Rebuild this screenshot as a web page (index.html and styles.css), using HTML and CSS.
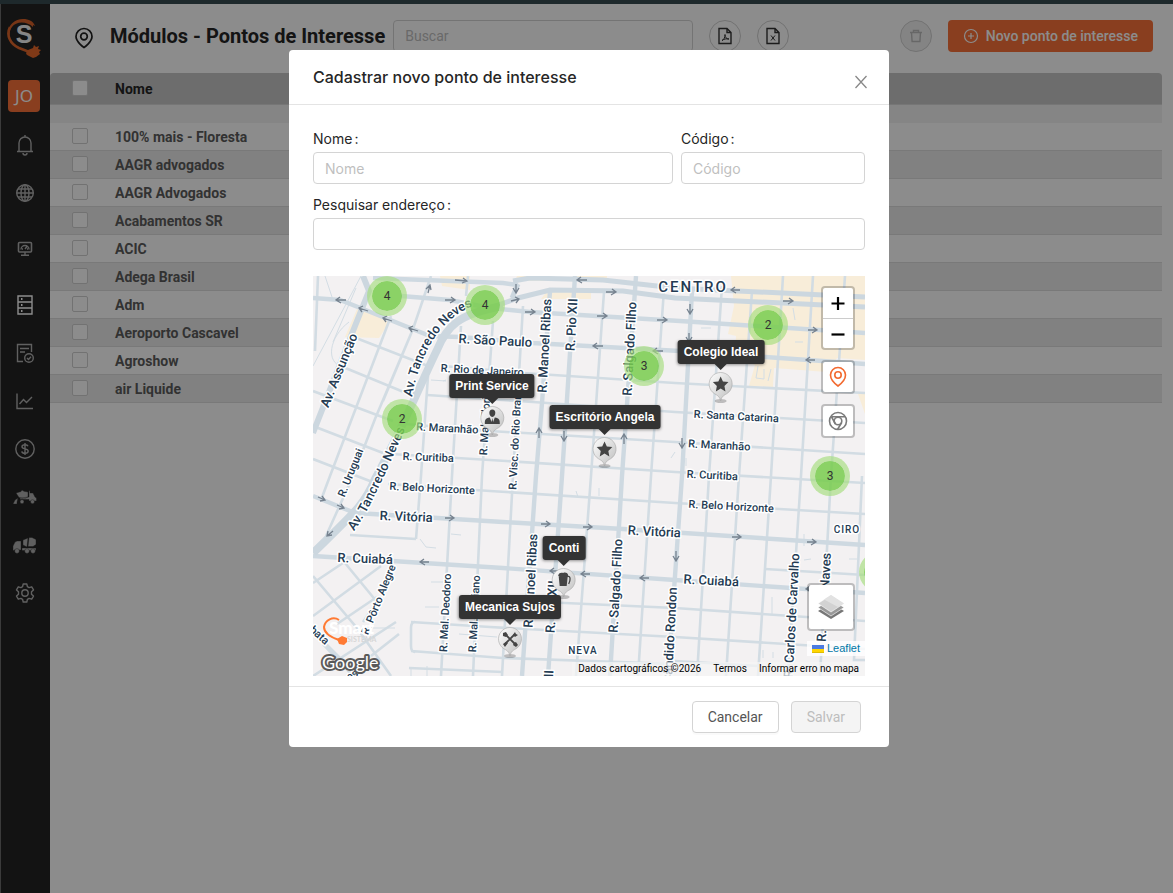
FILE: index.html
```html
<!DOCTYPE html>
<html lang="pt-BR">
<head>
<meta charset="utf-8">
<meta name="viewport" content="width=device-width, initial-scale=1">
<title>Módulos - Pontos de Interesse</title>
<link rel="stylesheet" href="styles.css">
</head>
<body>
<div class="topbar"></div>
<div class="shell">
  <nav class="sidebar" aria-label="Menu principal">
    <a class="brand" href="#" aria-label="Início">
      <svg width="36" height="42" viewBox="0 0 36 42">
        <path d="M3 9c-4 8 0 17 9 21l8 3 2 4" fill="none" stroke="#e0672c" stroke-width="2.600"/>
        <path d="M1 15C1 7 8 1 16 1c6 0 10 2 12 7l-2-1v2C20 3 9 3 5 9c-2 3-3 5-2 8z" fill="#d96228"/>
        <path d="M19 36l2-4 5-2 1-3 2 2 3-1-1 3 3 1-2 2 1 2-4 3-3 1-4-2z" fill="#e8682a"/>
        <text x="17" y="25" class="brand-letter">S</text>
      </svg>
    </a>
    <button class="avatar" type="button">JO</button>
    <ul class="menu">
      <li><a href="#" aria-label="Notificações"><svg width="20" height="22" viewBox="0 0 20 22"><path d="M10 1v2M4 17V9a6 6 0 0 1 12 0v8M2 17.500h16M8 19a2 2 0 0 0 4 0"/></svg></a></li>
      <li><a href="#" aria-label="Mapa"><svg width="20" height="20" viewBox="0 0 20 20"><circle cx="10" cy="10" r="8.300"/><ellipse cx="10" cy="10" rx="4" ry="8.300"/><path d="M10 1.700v16.600M1.700 10h16.600M3 6h14M3 14h14"/></svg></a></li>
      <li class="tall"><a href="#" aria-label="Painel"><svg width="16" height="16" viewBox="0 0 16 16"><rect x="1.500" y="1.500" width="13" height="9.500" rx="1" stroke-width="1.600"/><path d="M4 8.500a4 4 0 0 1 8 0M8 8l2-2.500M5 8h1M10 8h1M8 11v3M4 14.300h8"/></svg></a></li>
      <li class="current"><a href="#" aria-label="Módulos" aria-current="page"><svg width="18" height="22" viewBox="0 0 18 22"><path d="M2 2h14v18H2zM2 8h14M2 14h14"/><path d="M5 5h1.500M5 11h1.500M5 17h1.500" stroke-width="2"/></svg></a></li>
      <li><a href="#" aria-label="Auditoria"><svg width="20" height="22" viewBox="0 0 20 22"><path d="M8 19.500H2.500v-17h14V10M5 6.500h9M5 10h5"/><circle cx="14" cy="16" r="4.300"/><path d="M12 16l1.500 1.500L16 14.700"/></svg></a></li>
      <li><a href="#" aria-label="Relatórios"><svg width="20" height="20" viewBox="0 0 20 20"><path d="M2 2.500v15h16M4.500 13l4-4.500 3 3L17 6"/></svg></a></li>
      <li><a href="#" aria-label="Financeiro"><svg width="22" height="22" viewBox="0 0 22 22"><circle cx="11" cy="11" r="9.200"/><path d="M14 8.300C13.600 7 12.400 6.700 11 6.700c-1.800 0-3 .8-3 2.100 0 3 6.200 1.200 6.200 4.300 0 1.400-1.400 2.200-3.200 2.200-1.700 0-3-.6-3.200-2M11 5v12"/></svg></a></li>
      <li><a href="#" aria-label="Descarga"><svg class="solid" width="24" height="14" viewBox="0 0 24 14"><path d="M3 3l5-1.500L9 0l2 1.300L15 2v5l-4 2-5-1.500zM0 14l2-4 3-2-1 4v2zM16 1l1-.5V3h3l2 4 1.500 1v3H16V9.500h-9V8l9-1z"/><circle cx="9" cy="11.700" r="2"/><circle cx="19.500" cy="11.700" r="2"/></svg></a></li>
      <li><a href="#" aria-label="Betoneiras"><svg class="solid" width="24" height="17" viewBox="0 0 24 17"><path d="M0 14V9l2-4 2-1h4v9H1zM10 3l5-2-1 9-4-2zM16 .5l3 0 4 2v5l-3 2h-5zM9 11h14v2.500H9z"/><circle cx="4" cy="14" r="2.400"/><circle cx="14" cy="14" r="2.400"/><circle cx="20" cy="14" r="2.400"/></svg></a></li>
      <li><a href="#" aria-label="Configurações"><svg width="22" height="22" viewBox="0 0 22 22"><path d="M9.200 2h3.600l.6 2.600 1.700 1 2.600-.8 1.800 3.100-2 1.900v2.400l2 1.900-1.800 3.100-2.600-.8-1.700 1-.6 2.600H9.200l-.6-2.600-1.700-1-2.600.8-1.800-3.100 2-1.900V9.800l-2-1.900 1.800-3.100 2.600.8 1.700-1z" stroke-linejoin="round"/><circle cx="11" cy="11" r="3.200"/></svg></a></li>
    </ul>
  </nav>

  <main class="page">
    <header class="toolbar">
      <svg class="title-icon" width="20" height="24" viewBox="0 0 20 24"><path d="M10 21.500S2 16 2 10.500a8 8 0 0 1 16 0C18 16 10 21.500 10 21.500z"/><circle cx="10" cy="10.500" r="3.300"/></svg>
      <h1>Módulos - Pontos de Interesse</h1>
      <input class="field search" type="search" placeholder="Buscar" aria-label="Buscar">
      <div class="exports">
        <button class="round" type="button" aria-label="Exportar PDF"><svg width="14" height="18" viewBox="0 0 14 18"><path d="M1 1.500h8l4 4v11H1zM9 1.500v4h4"/><path class="fine" d="M4 13.500c2-1 3-3 3-6 0 3 1.500 4.500 4 4.500-3-.5-5 0-7 1.500"/></svg></button>
        <button class="round" type="button" aria-label="Exportar Excel"><svg width="14" height="18" viewBox="0 0 14 18"><path d="M1 1.500h8l4 4v11H1zM9 1.500v4h4"/><path class="fine" d="M5 8.500l4 5M9 8.500l-4 5"/></svg></button>
      </div>
      <div class="actions">
        <button class="round off" type="button" aria-label="Excluir" disabled><svg width="14" height="14" viewBox="0 0 14 14"><path d="M1 3.500h12M4.500 3.500v-2h5v2M2.500 3.500l.6 9h7.800l.6-9"/></svg></button>
        <button class="primary" type="button"><svg width="16" height="16" viewBox="0 0 16 16"><circle cx="8" cy="8" r="6.500"/><path d="M8 5v6M5 8h6"/></svg>Novo ponto de interesse</button>
      </div>
    </header>

    <table class="grid">
      <thead>
        <tr><th class="pick"><input type="checkbox" aria-label="Selecionar todos"></th><th>Nome</th></tr>
        <tr class="filter"><td colspan="2"></td></tr>
      </thead>
      <tbody>
        <tr><td class="pick"><input type="checkbox" aria-label="Selecionar 100% mais - Floresta"></td><td>100% mais - Floresta</td></tr>
        <tr><td class="pick"><input type="checkbox" aria-label="Selecionar AAGR advogados"></td><td>AAGR advogados</td></tr>
        <tr><td class="pick"><input type="checkbox" aria-label="Selecionar AAGR Advogados"></td><td>AAGR Advogados</td></tr>
        <tr><td class="pick"><input type="checkbox" aria-label="Selecionar Acabamentos SR"></td><td>Acabamentos SR</td></tr>
        <tr><td class="pick"><input type="checkbox" aria-label="Selecionar ACIC"></td><td>ACIC</td></tr>
        <tr><td class="pick"><input type="checkbox" aria-label="Selecionar Adega Brasil"></td><td>Adega Brasil</td></tr>
        <tr><td class="pick"><input type="checkbox" aria-label="Selecionar Adm"></td><td>Adm</td></tr>
        <tr><td class="pick"><input type="checkbox" aria-label="Selecionar Aeroporto Cascavel"></td><td>Aeroporto Cascavel</td></tr>
        <tr><td class="pick"><input type="checkbox" aria-label="Selecionar Agroshow"></td><td>Agroshow</td></tr>
        <tr><td class="pick"><input type="checkbox" aria-label="Selecionar air Liquide"></td><td>air Liquide</td></tr>
      </tbody>
    </table>
  </main>
</div>

<div class="mask">
  <section class="modal" role="dialog" aria-modal="true" aria-labelledby="dialog-title">
    <header class="modal-head">
      <h2 id="dialog-title">Cadastrar novo ponto de interesse</h2>
      <button class="close" type="button" aria-label="Fechar"><svg width="14" height="14" viewBox="0 0 14 14"><path d="M1.500 1l11 12M12.500 1l-11 12"/></svg></button>
    </header>
    <form class="modal-body">
      <div class="form-row">
        <div class="form-item wide"><label for="nome">Nome<span class="colon">:</span></label><input class="field" id="nome" type="text" placeholder="Nome"></div>
        <div class="form-item"><label for="codigo">Código<span class="colon">:</span></label><input class="field" id="codigo" type="text" placeholder="Código"></div>
      </div>
      <div class="form-item"><label for="endereco">Pesquisar endereço<span class="colon">:</span></label><input class="field" id="endereco" type="text"></div>

      <div class="map">
        <svg class="map-tiles" viewBox="0 0 552 400" preserveAspectRatio="xMidYMid slice">
          <defs>
            <path id="tancredo-n" d="M99 121C104 92 116 66 130 51C141 39 152 33 170 25"/>
            <path id="tancredo-s" d="M41 255C54 238 64 214 74 194C83 172 92 158 97 136"/>
          </defs>
          <g class="zones">
            <path d="M44 33l34 11-12 18-34-1zM127 0h30v14l-28-4zM204 0h34v5h-36zM234 15h44v8h-50zM262 0h32v4h-32zM418 0h134v84l-28-2-10 14-53-4-1 19-24-1 6-21-20-7 1-22-8-2 6-28z"/>
            <path d="M545 118l7 0v20zM0 274l10-9 3 3-12 11z"/>
          </g>
          <g class="lanes">
            <path d="M43 12L20 66M48 0L0 90M12 0l8 24M30 91c-18-4-14-30 6-45M130 105l3-1M118 104l15 1M388 52h10M455 105l3-12M445 90l-2 12 8 1v-10M263 215l2 6M286 212v8M138 258l10 1M107 263l6 8 10 1M118 306h12M112 331h14M52 352h30M98 392l0 8M114 390v10M146 358l38 3M459 321v18M491 270v-12M498 283l-7 1M544 283h-8M482 44l-2-12M490 66h-8M373 182v8M362 176l-4 6M480 324l-2 12M450 374v8M460 376v6"/>
          </g>
          <g class="roads">
            <path d="M118 0L100 53L62 143L40 200L13 260M78 40L17 200L8 224M5 0L2 75M43 62l72 28M30 91l68 28M0 115l80 30M0 150l70 27M0 183l62 24M100 53L70 125M155 0l-2 20"/>
            <path d="M130 90L210 97L362 107L552 117M114 119L220 126L362 136L552 147M92 148L177 155L362 166L552 178M78 178L177 184L362 196L552 207M75 208L177 215L362 227L552 238M37 259l66 4M452 293l100 6"/>
            <path d="M98 346L177 351L362 361L552 373M230 326L362 332L552 345M98 375L190 382L362 388M102 346q-4 0-4 6v18q0 6 4 6M96 392l94 4M362 385L445 390"/>
            <path d="M115 100L108 200L103 263M148 50L139 200L128 400M180 45L169 200L160 400M210 30L200 200L189 400M291 16L278 200L263 400M351 13L338 200L325 400M409 10L396 200L384 400M439 15L426 200L413 400M470 0L458 200L445 400M500 0L488 200L475 400M532 0L518 200L507 400M549 200L541 384h11"/>
            <path d="M0 307l30-20M0 340l68-50M0 400l83-54M24 348l40-27M58 380l28-22M0 300l44 52l34 48M32 287l32 39l-14 20M10 368l30 32M0 355l30 30"/>
          </g>
          <g class="avenues">
            <path d="M60 2L190 7L205 9M0 22L27 24L50 33L117 60L147 61L219 67L367 75L552 88M88 20L137 24L177 32L217 36L367 45L552 57"/>
            <path d="M43 237L190 246L310 253L552 269M0 280L190 292L362 304L552 317M0 220l42 17"/>
            <path d="M237 15L229 127L223 200L209 400M262 0L249 200L235 400M323 0L309 200L297 400M379 15L369 200L355 400"/>
          </g>
          <g class="highways">
            <path d="M50 0L56 15L42 50L0 157" stroke-width="6"/>
            <path d="M177 32L205 22L237 14L310 15L362 22L552 31M200 5L217 2L290 4L362 12L552 21M205 8l-6 14" stroke-width="5"/>
            <path d="M190 30C145 38 134 50 124 74C112 98 90 152 62 203C52 228 42 236 0 277" stroke-width="8"/>
          </g>
          <g class="arrows">
            <path d="M142 4l12 1m-4-3l4 3-5 2M33 24H23m4-3l-4 3 5 3M55 35l-9-3m4-2l-4 2 3 4M79 45l-9-3m4-2l-4 2 3 4M105 55l-9-3m4-2l-4 2 3 4M115 17l2-8m-4 4l4-4 1 5M132 24h10m-4-3l4 3-5 3M212 36h10m-4-3l4 3-5 3M284 40h10m-4-3l4 3-5 3M344 44h10m-4-3l4 3-5 3M293 16h10m-4-3l4 3-5 3M274 4h-10m4-3l-4 3 5 3M290 70h-10m4-3l-4 3 5 3M350 75h-10m4-3l-4 3 5 3M203 8v8m-3-4l3 5 3-5M198 25l8-2m-4-2l4 2-3 4"/>
            <path d="M427 14h-9m4-3l-4 3 5 3M470 25h10m-4-3l4 3-5 3M495 54h9m-4-3l4 3-5 3M502 84h-9m4-3l-4 3 5 3M377 28v9m-3-4l3 5 3-5M376 57v8m-3-4l3 5 3-5M369 162v9m-3-4l3 5 3-5M226 162v-9m-3 4l3-5 3 5M251 155v9m-3-4l3 5 3-5M311 168v-9m-3 4l3-5 3 5"/>
            <path d="M132 242h9m-4-3l4 3-5 3M228 248h9m-4-3l4 3-5 3M270 251h9m-4-3l4 3-5 3M419 261h9m-4-3l4 3-5 3M494 266h9m-4-3l4 3-5 3M116 286h-9m4-3l-4 3 5 3M246 295h-9m4-3l-4 3 5 3M277 298h-9m4-3l-4 3 5 3M336 302h-9m4-3l-4 3 5 3M502 313h-9m4-3l-4 3 5 3M363 275v9m-3-4l3 5 3-5M5 221l7 3m-3-4l3 4-5 1M24 229l7 3m-3-4l3 4-5 1M20 255l-6 5m1-5l-1 5 5-1"/>
          </g>
          <g class="labels major">
            <text><textPath href="#tancredo-n">Av. Tancredo Neves</textPath></text>
            <text><textPath href="#tancredo-s">Av. Tancredo Neves</textPath></text>
            <g class="mid">
            <text transform="translate(30 96) rotate(-68)">Av. Assunção</text>
            <text transform="translate(182 69) rotate(3)">R. São Paulo</text>
            <text transform="translate(93 245) rotate(2)">R. Vitória</text>
            <text transform="translate(52 287) rotate(2)">R. Cuiabá</text>
            <text transform="translate(341 260) rotate(3)">R. Vitória</text>
            <text transform="translate(398 309) rotate(3)">R. Cuiabá</text>
            <text transform="translate(236 70) rotate(-87)">R. Manoel Ribas</text>
            <text transform="translate(263 49) rotate(-87)">R. Pio XII</text>
            <text transform="translate(321 73) rotate(-87)">R. Salgado Filho</text>
            <text transform="translate(222 305) rotate(-87)">R. Manoel Ribas</text>
            <text transform="translate(243 331) rotate(-87)">R. Pio XII</text>
            <text transform="translate(307 310) rotate(-87)">R. Salgado Filho</text>
            <text transform="translate(361 367) rotate(-87)">R. Cândido Rondon</text>
            <text transform="translate(483 340) rotate(-87)">R. Carlos de Carvalho</text>
            <text transform="translate(517 295) rotate(-87)">Naves</text>
            <text transform="translate(513 360) rotate(-87)">R.</text>
            <text transform="translate(240 402) rotate(-87)">XII</text>
            </g>
          </g>
          <g class="labels minor">
            <text transform="translate(41 198) rotate(-68)">R. Uruguai</text>
            <text transform="translate(169 98) rotate(3)">R. Rio de Janeiro</text>
            <text transform="translate(134 156) rotate(3)">R. Maranhão</text>
            <text transform="translate(115 185) rotate(2)">R. Curitiba</text>
            <text transform="translate(119 216) rotate(3)">R. Belo Horizonte</text>
            <text transform="translate(423 144) rotate(3)">R. Santa Catarina</text>
            <text transform="translate(406 173) rotate(3)">R. Maranhão</text>
            <text transform="translate(399 203) rotate(3)">R. Curitiba</text>
            <text transform="translate(418 234) rotate(3)">R. Belo Horizonte</text>
            <text transform="translate(206 160) rotate(-87)">R. Visc. do Rio Branco</text>
            <text transform="translate(176 141) rotate(-87)">R. Mal. Floriano</text>
            <text transform="translate(136 337) rotate(-87)">R. Mal. Deodoro</text>
            <text transform="translate(165 338) rotate(-87)">R. Mal. Floriano</text>
            <text transform="translate(69 325) rotate(-68)">R. Pôrto Alegre</text>
            <text transform="translate(4 362) rotate(42)">bata</text>
            <text transform="translate(41 402) rotate(-30)">es</text>
          </g>
          <g class="labels area">
            <text x="380" y="16" class="centre">CENTRO</text>
            <text x="270" y="378">NEVA</text>
            <text x="534" y="257">CIRO</text>
          </g>
          <g class="watermark">
            <text x="16" y="358" class="wm-name">Smart</text>
            <text x="34" y="366" class="wm-sub">SISTEMA</text>
            <path class="wm-line" d="M26 344C20 340 12 344 11 351c0 6 6 10 15 13"/>
            <path class="wm-plug" d="M24 363l5-3 5 2v4l-3 3-5-1z"/>
            <text x="9" y="393" class="google">Google</text>
          </g>
        </svg>

        <button class="cluster c1" type="button">4</button>
        <button class="cluster c2" type="button">4</button>
        <button class="cluster c3" type="button">2</button>
        <button class="cluster c4" type="button">3</button>
        <button class="cluster c5" type="button">2</button>
        <button class="cluster c6" type="button">3</button>
        <button class="cluster c7" type="button">2</button>

        <div class="poi p1"><span class="tip">Print Service</span><svg width="26" height="32" viewBox="0 0 26 32"><use href="#pin"/><path class="glyph" d="M13 3.500c2 0 3 1.300 3 3.300S15 11 13 11s-3-2.200-3-4.200 1-3.300 3-3.300zM5.500 18c0-4 .5-6 5-6.500l1.700 4.500.8-4 .8 4 1.700-4.500c4.500.5 5 2.500 5 6.500z"/></svg></div>
        <div class="poi p2"><span class="tip">Escritório Angela</span><svg width="26" height="32" viewBox="0 0 26 32"><use href="#pin"/><path class="glyph" d="M13 4.500l2.300 5 5.500.6-4 3.800 1 5.500-4.800-2.800-4.800 2.800 1-5.500-4-3.800 5.500-.6z"/></svg></div>
        <div class="poi p3"><span class="tip">Colegio Ideal</span><svg width="26" height="32" viewBox="0 0 26 32"><use href="#pin"/><path class="glyph" d="M13 4.500l2.300 5 5.500.6-4 3.800 1 5.500-4.800-2.800-4.800 2.800 1-5.500-4-3.800 5.500-.6z"/></svg></div>
        <div class="poi p4"><span class="tip">Conti</span><svg width="26" height="32" viewBox="0 0 26 32"><use href="#pin"/><path class="glyph" d="M8 8l9 1-1 9H9zM7.500 8c0-3 3-4 5-3 2-1 5 0 5 2.500v1.500z"/><path d="M17 8.500c3-1 3 4 1 7.500" fill="none" stroke="#444" stroke-width="1.300"/></svg></div>
        <div class="poi p5"><span class="tip">Mecanica Sujos</span><svg width="26" height="32" viewBox="0 0 26 32"><use href="#pin"/><path d="M8 7l11 11M18 7L8 17" fill="none" stroke="#444" stroke-width="1.800"/><path class="glyph" d="M6 6l3-1 2 3-2 2-3-1zM17 16l2-1 2 3-2 2-3-2zM16 8l2-3 1 2 2 1-3 2zM6 17l3-2 2 1-3 4z"/></svg></div>

        <div class="controls">
          <div class="bar">
            <button type="button" aria-label="Aproximar"><svg width="16" height="16" viewBox="0 0 16 16"><path d="M8 2v13M1.500 8.500h13"/></svg></button>
            <button type="button" aria-label="Afastar"><svg width="16" height="16" viewBox="0 0 16 16"><path d="M1.500 8.500h13"/></svg></button>
          </div>
          <div class="bar"><button type="button" aria-label="Pontos de interesse"><svg class="orange" width="20" height="22" viewBox="0 0 20 22"><path d="M10 20S2.500 14.500 2.500 9a7.500 7.500 0 0 1 15 0C17.500 14.500 10 20 10 20z"/><circle cx="10" cy="9" r="3.200"/></svg></button></div>
          <div class="bar"><button type="button" aria-label="Street View"><svg class="grey" width="20" height="20" viewBox="0 0 20 20"><circle cx="10" cy="10" r="8.500"/><circle cx="10" cy="10" r="3.800"/><path d="M4 5.800h13.200M3.300 5.500l4.200 7.500M9.500 18.500l4.200-7"/></svg></button></div>
        </div>

        <div class="bottom">
          <button class="layers" type="button" aria-label="Camadas"><svg width="28" height="28" viewBox="0 0 28 28"><path d="M14 10L27 18 14 26 1 18z" fill="#777"/><path d="M14 6L27 14.500 14 23 1 14.500z" fill="#999" stroke="#fff" stroke-width=".6"/><path d="M14 2L27 10.500 14 19 1 10.500z" fill="#d2d2d2" stroke="#fff" stroke-width=".6"/><path d="M14 2L27 10.500 21 14 7 6.500z" fill="#e2e2e2"/></svg></button>
          <a class="leaflet" href="#"><svg width="12" height="8" viewBox="0 0 12 8"><path fill="#4c7be1" d="M0 0h12v4H0z"/><path fill="#ffd500" d="M0 4h12v3H0z"/><path fill="#e0bc00" d="M0 7h12v1H0z"/></svg>Leaflet</a>
          <div class="credits"><span>Dados cartográficos ©2026</span><a href="#">Termos</a><a href="#">Informar erro no mapa</a></div>
        </div>
      </div>
    </form>
    <footer class="modal-foot">
      <button class="btn" type="button">Cancelar</button>
      <button class="btn" type="button" disabled>Salvar</button>
    </footer>
  </section>
</div>

<svg class="defs" width="0" height="0" aria-hidden="true">
  <defs>
    <linearGradient id="pin-fill" x1="0" y1="0" x2="1" y2="1"><stop offset="0" stop-color="#fff"/><stop offset="1" stop-color="#bdbdbd"/></linearGradient>
    <g id="pin"><ellipse cx="13" cy="29" rx="6" ry="2" fill="#000" opacity=".22"/><path d="M13 29c-1-4-2-5-6-7.200a11.500 11.500 0 1 1 12 0c-4 2.200-5 3.200-6 7.200z" fill="url(#pin-fill)" stroke="#a8a8a8" stroke-width=".6"/></g>
  </defs>
</svg>
</body>
</html>
```
FILE: styles.css
```css
* { box-sizing: border-box; }

body {
  margin: 0;
  min-height: 100vh;
  display: flex;
  flex-direction: column;
  background: #fff;
  color: #262626;
  font: 14px/20px Roboto, "Liberation Sans", sans-serif;
}

button, input { font: inherit; color: inherit; }
button { cursor: pointer; }
a { color: inherit; text-decoration: none; }
svg { display: block; flex: none; }
.defs { position: absolute; }

.topbar { height: 4px; background: #384c50; }
.shell { flex: 1; display: flex; }

/* Sidebar */
.sidebar {
  width: 50px;
  flex: none;
  display: flex;
  flex-direction: column;
  align-items: center;
  padding-top: 14px;
  background: #232323;
  box-shadow: inset 1px 0 #6c6c6c;
}
.brand { height: 62px; }
.brand-letter { font: 700 25px "Liberation Sans", sans-serif; fill: #f4f4f4; text-anchor: middle; }
.avatar {
  width: 32px;
  height: 32px;
  margin-right: 2px;
  padding: 0;
  border: 0;
  border-radius: 4px;
  background: #fa7239;
  color: #fff;
  font: 17px/32px "Noto Sans", sans-serif;
}
.menu { list-style: none; margin: 9px 0 0; padding: 0; color: #b0b0b0; }
.menu a { display: grid; place-items: center; width: 48px; height: 48px; }
.menu .tall a { height: 64px; }
.menu .current { color: #fff; }
.menu svg { fill: none; stroke: currentColor; stroke-width: 1.4; }
.menu .solid { fill: currentColor; stroke: #232323; stroke-width: .4; }

/* Toolbar */
.page { flex: 1; min-width: 0; }
.toolbar { display: flex; align-items: center; padding: 16px 20px 21px 24px; }
.title-icon { fill: none; stroke: #222; stroke-width: 1.7; margin-top: 4px; }
h1 { margin: 0 8px 0 16px; font: 700 20px/32px Roboto, sans-serif; color: #262626; white-space: nowrap; }
.field {
  width: 100%;
  height: 32px;
  padding: 4px 11px;
  border: 1px solid #d4d4d4;
  border-radius: 4px;
  background: #fff;
  outline: 0;
}
.field::placeholder { color: #bfbfbf; opacity: 1; }
.search { width: 300px; background: transparent; }
.exports, .actions { display: flex; gap: 16px; }
.exports { margin-left: 16px; }
.actions { margin-left: auto; }
.round {
  width: 32px;
  height: 32px;
  display: grid;
  place-items: center;
  padding: 0;
  border: 1px solid #d0d0d0;
  border-radius: 50%;
  background: transparent;
  color: #333;
}
.round svg { fill: none; stroke: currentColor; stroke-width: 1.4; }
.round .fine { stroke-width: 1; }
.round.off { background: #f0f0f0; color: #bcbcbc; }
.primary {
  display: flex;
  align-items: center;
  gap: 7px;
  height: 32px;
  padding: 0 15px;
  border: 0;
  border-radius: 4px;
  background: #fa7239;
  color: #fff;
  font-weight: 500;
  white-space: nowrap;
}
.primary svg { fill: none; stroke: currentColor; stroke-width: 1.2; }

/* Table */
.grid { width: calc(100% - 11px); border-collapse: separate; border-spacing: 0; color: #5c5c5c; font-weight: 700; }
.grid th, .grid td { height: 28px; padding: 0 0 0 1px; text-align: left; border-bottom: 1px solid #dcdcdc; }
.grid th { height: 32px; background: #c6c6c6; color: #262626; border-color: #d8d8d8; }
.grid th:first-child { border-top-left-radius: 4px; }
.grid th:last-child { border-top-right-radius: 4px; }
.grid .filter td { height: 18px; background: #f3f3f3; border: 0; }
.grid tbody tr:nth-child(even) { background: #ececec; }
.grid .pick { width: 64px; padding: 0 0 0 22px; }
.grid input {
  appearance: none;
  display: block;
  width: 16px;
  height: 16px;
  margin: 0 0 2px;
  border: 1px solid #cfcfcf;
  border-radius: 2px;
  background: #fff;
}

/* Modal */
.mask {
  position: fixed;
  inset: 0;
  padding: 50px 0 0 5px;
  overflow: auto;
  background: rgba(0, 0, 0, .45);
}
.modal {
  width: 600px;
  max-width: 100%;
  margin: 0 auto;
  border-radius: 4px;
  background: #fff;
  font-family: Inter, Roboto, sans-serif;
}
.modal-head { display: flex; justify-content: space-between; align-items: center; padding-left: 24px; border-bottom: 1px solid #e4e4e4; }
h2 { margin: 0; font-size: 16px; font-weight: 500; line-height: 22px; }
.close { width: 56px; height: 54px; display: grid; place-items: center; padding: 9px 0 0; border: 0; background: none; color: #888; }
.close svg { fill: none; stroke: currentColor; stroke-width: 1.3; }
.modal-body { display: flex; flex-direction: column; gap: 11px; padding: 24px 24px 10px; }
.form-row { display: grid; grid-template-columns: 360fr 184fr; gap: 8px; }
.form-item { display: flex; flex-direction: column; gap: 3px; }
.colon { margin-left: 2px; }
.modal-foot { display: flex; justify-content: flex-end; gap: 12px; padding: 14px 28px; border-top: 1px solid #e4e4e4; }
.btn {
  height: 32px;
  padding: 0 15px;
  border: 1px solid #d4d4d4;
  border-radius: 4px;
  background: #fff;
  color: #555;
  font-family: Roboto, sans-serif;
  box-shadow: 0 2px 0 rgba(0, 0, 0, .02);
}
.btn:disabled { background: #f4f4f4; color: #bdbdbd; box-shadow: none; }

/* Map */
.map { position: relative; height: 400px; margin-top: 15px; overflow: hidden; background: #f3f1f2; font-family: Roboto, sans-serif; }
.map-tiles { width: 100%; height: 100%; }
.map-tiles path { fill: none; }
.zones path { fill: #f8edd9; }
.lanes { stroke: #d3dde4; stroke-width: 1; }
.roads { stroke: #d2dce3; stroke-width: 2.6; }
.avenues { stroke: #ced9e1; stroke-width: 4.4; }
.highways { stroke: #ccd7df; }
.arrows { stroke: #76828f; stroke-width: 1.3; }
.labels { fill: #243b53; stroke: #fff; stroke-width: 3; paint-order: stroke; stroke-linejoin: round; font-weight: 500; }
.major { font-size: 13px; }
.minor { font-size: 11px; text-anchor: middle; }
.mid { text-anchor: middle; }
.area { font-size: 10px; letter-spacing: 1px; text-anchor: middle; }
.centre { font-size: 15px; letter-spacing: 2px; }
.wm-name { font: 900 17px Lato, sans-serif; fill: #fff; }
.wm-sub { font: 700 7px Lato, sans-serif; fill: #d6d6d6; }
.wm-line { stroke: #ff7a33; stroke-width: 2; }
.map-tiles .wm-plug { fill: #ff7a33; }
.google { font: 400 18px Lato, sans-serif; fill: #fff; stroke: #5a5a5a; stroke-width: 4; paint-order: stroke; stroke-linejoin: round; }

.cluster {
  position: absolute;
  width: 40px;
  height: 40px;
  padding: 0;
  border: 5px solid rgba(165, 221, 125, .65);
  border-radius: 50%;
  background: rgba(120, 204, 78, .85);
  background-clip: padding-box;
  font-size: 12px;
  color: #333;
}
.c1 { left: 54px; top: 0; }
.c2 { left: 152px; top: 9px; }
.c3 { left: 69px; top: 123px; }
.c4 { left: 311px; top: 70px; }
.c5 { left: 435px; top: 29px; }
.c6 { left: 497px; top: 180px; }
.c7 { left: 546px; top: 276px; }

.poi { position: absolute; display: flex; flex-direction: column; align-items: center; gap: 8px; transform: translateX(-50%); }
.poi .glyph { fill: #444; }
.tip {
  position: relative;
  padding: 0 6px;
  border-radius: 3px;
  background: #333;
  color: #fff;
  font: 700 12px/24px "Liberation Sans", sans-serif;
  white-space: nowrap;
  box-shadow: 0 1px 3px rgba(0, 0, 0, .4);
}
.tip::after { content: ""; position: absolute; top: 100%; left: 50%; margin-left: -6px; border: 6px solid transparent; border-top-color: #333; border-bottom: 0; }
.p1 { left: 179px; top: 98px; }
.p2 { left: 292px; top: 129px; }
.p3 { left: 408px; top: 64px; }
.p4 { left: 251px; top: 260px; }
.p5 { left: 197px; top: 319px; }

.controls { position: absolute; top: 10px; right: 10px; display: flex; flex-direction: column; gap: 10px; }
.bar, .layers { border: 2px solid rgba(0, 0, 0, .22); border-radius: 4px; background: #fff; background-clip: padding-box; }
.bar button { width: 30px; height: 30px; display: grid; place-items: center; padding: 0; border: 0; background: none; color: #000; }
.bar button + button { border-top: 1px solid #ccc; }
.bar svg { fill: none; stroke: currentColor; stroke-width: 2.2; }
.bar .orange { stroke: #f26a30; stroke-width: 1.6; }
.bar .grey { stroke: #7a7a7a; stroke-width: 1.6; }

.bottom { position: absolute; right: 0; bottom: 0; display: flex; flex-direction: column; align-items: flex-end; }
.layers { width: 48px; height: 48px; display: grid; place-items: center; padding: 0; margin: 0 10px 10px; }
.leaflet { display: flex; align-items: center; gap: 3px; margin-bottom: 6px; padding: 0 5px; background: rgba(255, 255, 255, .8); color: #0078a8; font: 11px/15px "Liberation Sans", sans-serif; }
.credits { display: flex; gap: 12px; padding: 0 6px; background: rgba(245, 245, 245, .7); color: #000; font-size: 10px; line-height: 14px; }
```
